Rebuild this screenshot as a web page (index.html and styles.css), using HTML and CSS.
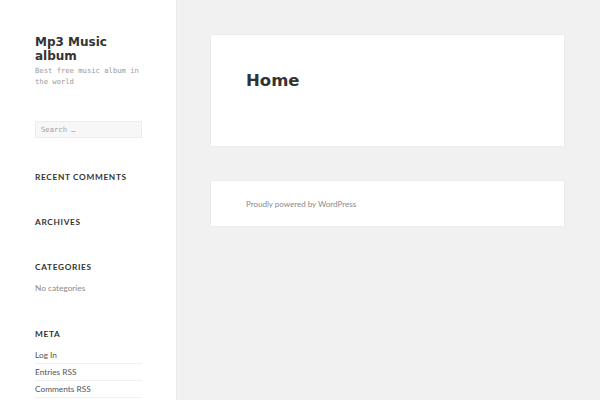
FILE: index.html
```html
<!DOCTYPE html>
<html lang="en">
<head>
<meta charset="utf-8">
<title>Mp3 Music album</title>
<link rel="stylesheet" href="styles.css">
</head>
<body>
<div class="page">
  <aside class="sidebar">
    <div class="branding">
      <p class="site-title">Mp3 Music album</p>
      <p class="site-desc">Best free music album in the world</p>
    </div>
    <div class="widget">
      <input class="search" type="search" placeholder="Search …">
    </div>
    <div class="widget">
      <h2 class="widget-title">Recent Comments</h2>
    </div>
    <div class="widget">
      <h2 class="widget-title">Archives</h2>
    </div>
    <div class="widget widget-list">
      <h2 class="widget-title">Categories</h2>
      <ul class="list">
        <li class="muted">No categories</li>
      </ul>
    </div>
    <div class="widget widget-list">
      <h2 class="widget-title">Meta</h2>
      <ul class="list">
        <li class="bordered">Log In</li>
        <li class="bordered">Entries RSS</li>
        <li class="bordered">Comments RSS</li>
      </ul>
    </div>
  </aside>
  <main class="main">
    <article class="card entry">
      <h1 class="entry-title">Home</h1>
    </article>
    <footer class="card footer">
      <span>Proudly powered by WordPress</span>
    </footer>
  </main>
</div>
</body>
</html>
```
FILE: styles.css
```css
html, body {
  margin: 0;
  padding: 0;
  background: #f1f1f1;
  height: 100%;
}
.page {
  display: flex;
  align-items: stretch;
  overflow: hidden;
  height: 400px;
}
.sidebar {
  width: 176px;
  box-sizing: border-box;
  flex: none;
  background: #fff;
  padding: 36px 34px 0 35px;
  box-shadow: 0 0 1px rgba(0, 0, 0, 0.15);
}
.site-title {
  margin: 0;
  font-family: "DejaVu Sans", sans-serif;
  font-weight: bold;
  font-size: 12px;
  line-height: 13.5px;
  color: #333;
}
.site-desc {
  margin: 3px 0 0;
  font-family: "DejaVu Sans Mono", monospace;
  font-size: 7.2px;
  line-height: 10.5px;
  color: #999;
}
.branding {
  margin-bottom: 34px;
}
.widget {
  margin-bottom: 33px;
}
.widget-list {
  margin-bottom: 32px;
}
.search {
  display: block;
  box-sizing: border-box;
  width: 107px;
  height: 17px;
  margin: 0;
  padding: 0 5px;
  border: 1px solid #ededed;
  background: #f7f7f7;
  font-family: "DejaVu Sans Mono", monospace;
  font-size: 7.2px;
  color: #999;
  outline: none;
}
.search::placeholder {
  color: #a0a0a0;
}
.widget-title {
  margin: 0;
  font-family: "Lato", sans-serif;
  font-weight: bold;
  font-size: 8.3px;
  line-height: 12px;
  letter-spacing: 0.08em;
  text-transform: uppercase;
  color: #333;
}
.list {
  list-style: none;
  margin: 7px 0 0;
  padding: 0;
  font-family: "Lato", sans-serif;
  font-size: 8.3px;
  line-height: 16px;
}
.list li {
  color: #555;
}
.list .muted {
  color: #8a8a8a;
}
.list .bordered {
  border-bottom: 1px solid #f0f0f0;
}
.main {
  flex: none;
  width: 353px;
  margin-left: 35px;
  padding-top: 35px;
  display: flex;
  flex-direction: column;
  gap: 35px;
}
.card {
  background: #fff;
  box-shadow: 0 0 1px rgba(0, 0, 0, 0.15);
}
.entry {
  padding: 36px 35px 55px;
}
.entry-title {
  margin: 0;
  font-family: "DejaVu Sans", sans-serif;
  font-weight: bold;
  font-size: 16.5px;
  line-height: 20px;
  color: #333;
}
.footer {
  height: 45px;
  box-sizing: border-box;
  padding: 0 35px;
  display: flex;
  align-items: center;
  font-family: "Lato", sans-serif;
  font-size: 8px;
  color: #8a8a8a;
}
```
